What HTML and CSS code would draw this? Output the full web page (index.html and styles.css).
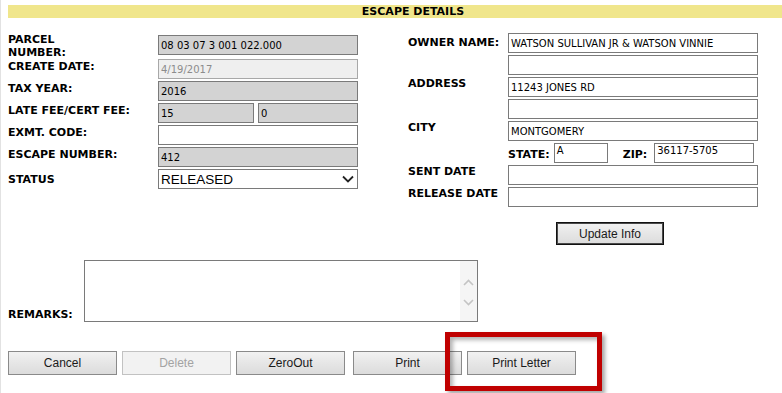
FILE: index.html
```html
<!DOCTYPE html>
<html lang="en">
<head>
    <meta charset="UTF-8">
    <meta name="viewport" content="width=device-width, initial-scale=1.0">
    <title>Escape Details</title>
    <link rel="stylesheet" href="styles.css">
</head>
<body>
    <div class="page">
        <div class="title">ESCAPE DETAILS</div>

        <div class="details">
            <div class="form-left">
                <label class="lbl lbl-wrap">PARCEL<br>NUMBER:</label>
                <input class="fld ro" value="08 03 07 3 001 022.000" readonly>

                <label class="lbl">CREATE DATE:</label>
                <input class="fld dis" value="4/19/2017" disabled>

                <label class="lbl">TAX YEAR:</label>
                <input class="fld ro" value="2016" readonly>

                <label class="lbl">LATE FEE/CERT FEE:</label>
                <div class="pair">
                    <input class="fld ro fee" value="15" readonly>
                    <input class="fld ro cert" value="0" readonly>
                </div>

                <label class="lbl">EXMT. CODE:</label>
                <input class="fld" value="">

                <label class="lbl">ESCAPE NUMBER:</label>
                <input class="fld ro" value="412" readonly>

                <label class="lbl lbl-status">STATUS</label>
                <div class="select">
                    <span>RELEASED</span>
                    <svg width="12" height="8" viewBox="0 0 12 8"><polyline points="1,1.5 6,6.5 11,1.5" fill="none" stroke="#222" stroke-width="1.8"/></svg>
                </div>
            </div>

            <div class="form-right">
                <div class="grid-right">
                    <label class="lbl lbl-owner">OWNER NAME:</label>
                    <input class="fld" value="WATSON SULLIVAN JR &amp; WATSON VINNIE">

                    <span></span>
                    <input class="fld" value="">

                    <label class="lbl">ADDRESS</label>
                    <input class="fld" value="11243 JONES RD">

                    <span></span>
                    <input class="fld" value="">

                    <label class="lbl">CITY</label>
                    <input class="fld" value="MONTGOMERY">

                    <span></span>
                    <div class="state-zip">
                        <label class="lbl">STATE:</label>
                        <div class="fld box state">A</div>
                        <label class="lbl zip-lbl">ZIP:</label>
                        <div class="fld box zip">36117-5705</div>
                    </div>

                    <label class="lbl">SENT DATE</label>
                    <input class="fld" value="">

                    <label class="lbl">RELEASE DATE</label>
                    <input class="fld" value="">
                </div>
                <button class="btn btn-default update">Update Info</button>
            </div>
        </div>

        <div class="remarks-row">
            <label class="lbl remarks-lbl">REMARKS:</label>
            <div class="remarks">
                <div class="remarks-text"></div>
                <div class="scroll">
                    <svg width="11" height="7" viewBox="0 0 11 7"><polyline points="1,6 5.5,1.5 10,6" fill="none" stroke="#c4c4c4" stroke-width="1.6"/></svg>
                    <svg width="11" height="7" viewBox="0 0 11 7"><polyline points="1,1 5.5,5.5 10,1" fill="none" stroke="#c4c4c4" stroke-width="1.6"/></svg>
                </div>
            </div>
        </div>

        <div class="actions">
            <button class="btn">Cancel</button>
            <button class="btn" disabled>Delete</button>
            <button class="btn">ZeroOut</button>
            <button class="btn print">Print</button>
            <button class="btn">Print Letter</button>
        </div>

        <div class="callout"></div>
    </div>
</body>
</html>
```

FILE: styles.css
```css
body {
    margin: 0;
    padding: 0;
    background: #fff;
    color: #000;
    font-family: "DejaVu Sans", Verdana, sans-serif;
    overflow: hidden;
}
.page {
    position: relative;
    height: 393px;
    padding: 5px 0 0 7px;
    border-left: 1px solid #e2e2e2;
    box-sizing: border-box;
}
.title {
    background: #f0e68c;
    height: 13px;
    line-height: 13px;
    padding-left: 36px;
    font-size: 11px;
    font-weight: bold;
    text-align: center;
}
.details {
    display: flex;
    align-items: flex-start;
    margin-top: 15px;
}
.lbl {
    font-size: 11px;
    font-weight: bold;
    line-height: 13px;
    padding-top: 1px;
    white-space: nowrap;
}
.form-left {
    display: grid;
    grid-template-columns: 150px 200px;
    row-gap: 2px;
    align-items: start;
    align-content: start;
    margin-top: 2px;
    width: 400px;
}
.lbl-wrap {
    margin: -2px 0 -2px;
    padding-top: 0;
}
.lbl-status {
    padding-top: 4px;
}
.fld {
    box-sizing: border-box;
    height: 20px;
    width: 100%;
    margin: 0;
    padding: 0 2px;
    border: 1px solid #7a7a7a;
    background: #fff;
    color: #000;
    font-family: "DejaVu Sans", Verdana, sans-serif;
    font-size: 10px;
    outline: none;
}
.fld.ro {
    background: #d3d3d3;
}
.fld.dis {
    background: #efefef;
    border-color: #a8a8a8;
    color: #8c8c8c;
}
.pair {
    display: flex;
    gap: 4px;
}
.fee {
    width: 96px;
}
.cert {
    width: 100px;
}
.select {
    display: flex;
    align-items: center;
    justify-content: space-between;
    box-sizing: border-box;
    height: 20px;
    padding: 0 3px 0 2px;
    border: 1px solid #7a7a7a;
    font-family: "Liberation Sans", Arial, sans-serif;
    font-size: 13.5px;
}
.form-right {
    display: flex;
    flex-direction: column;
}
.grid-right {
    display: grid;
    grid-template-columns: 100px 250px;
    row-gap: 2px;
    align-items: start;
    align-content: start;
}
.grid-right > .lbl {
    padding-top: 0;
}
.grid-right > .lbl-owner {
    padding-top: 3px;
}
.state-zip {
    display: flex;
    align-items: start;
    height: 20px;
}
.state-zip .lbl {
    padding-top: 5px;
}
.box {
    line-height: 12px;
    padding-top: 1px;
}
.state {
    width: 54px;
    margin-left: 4px;
}
.zip-lbl {
    margin-left: 15px;
}
.zip {
    width: 100px;
    margin-left: 7px;
}
.btn {
    box-sizing: border-box;
    width: 109px;
    height: 24px;
    margin: 0;
    padding: 0;
    border: 1px solid #8a8a8a;
    background: linear-gradient(#f2f2f2, #e6e6e6 50%, #dcdcdc);
    color: #1a1a1a;
    font-family: "Liberation Sans", Arial, sans-serif;
    font-size: 12px;
}
.btn:disabled {
    border-color: #c2c2c2;
    background: #f2f2f2;
    color: #a3a3a3;
}
.btn-default {
    border-color: #111;
    box-shadow: inset 0 0 0 1px #4a4a4a;
}
.update {
    width: 108px;
    height: 23px;
    margin: 15px 0 0 148px;
}
.remarks-row {
    display: flex;
    align-items: flex-end;
    margin-top: 15px;
}
.remarks-lbl {
    width: 76px;
    padding-bottom: 1px;
}
.remarks {
    display: flex;
    box-sizing: border-box;
    width: 394px;
    height: 62px;
    border: 1px solid #7a7a7a;
}
.remarks-text {
    flex: 1;
}
.scroll {
    width: 17px;
    background: #f5f5f5;
    display: flex;
    flex-direction: column;
    align-items: center;
    gap: 13px;
    padding-top: 18px;
    box-sizing: border-box;
}
.actions {
    display: flex;
    gap: 5px;
    margin-top: 29px;
}
.print {
    margin-left: 3px;
}
.callout {
    position: absolute;
    left: 444px;
    top: 332px;
    width: 157px;
    height: 59px;
    box-sizing: border-box;
    border: 5px solid #c00000;
    box-shadow: 3px 3px 4px rgba(0, 0, 0, 0.35), inset 3px 3px 4px rgba(0, 0, 0, 0.3);
    pointer-events: none;
}
```
